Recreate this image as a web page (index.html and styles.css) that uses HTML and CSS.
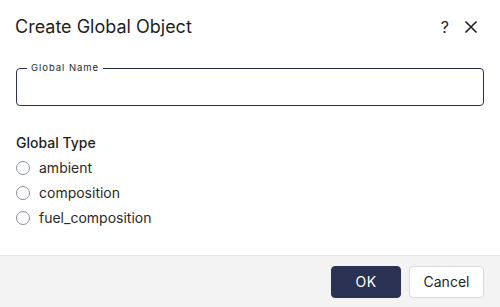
FILE: index.html
```html
<!DOCTYPE html>
<html>
<head>
<meta charset="utf-8">
<link rel="stylesheet" href="styles.css">
</head>
<body>
<div class="dialog">
  <div class="header">
    <h1 class="title">Create Global Object</h1>
    <div class="actions">
      <span class="help">?</span>
      <svg class="close" width="14" height="14" viewBox="0 0 14 14"><path d="M1.5 1.5L12.5 12.5M12.5 1.5L1.5 12.5" stroke="#1f1f1f" stroke-width="1.6" fill="none"/></svg>
    </div>
  </div>
  <div class="content">
    <fieldset class="field">
      <legend class="legend">Global Name</legend>
      <input class="input" type="text">
    </fieldset>
    <div class="group-label">Global Type</div>
    <div class="radios">
      <label class="radio"><span class="circle"></span>ambient</label>
      <label class="radio"><span class="circle"></span>composition</label>
      <label class="radio"><span class="circle"></span>fuel_composition</label>
    </div>
  </div>
  <div class="footer">
    <button class="btn btn-primary">OK</button>
    <button class="btn btn-secondary">Cancel</button>
  </div>
</div>
</body>
</html>
```
FILE: styles.css
```css
* { box-sizing: border-box; }
html, body { margin: 0; padding: 0; background: #fff; }
body { font-family: Inter, "Noto Sans", sans-serif; color: #1f1f1f; width: 500px; height: 307px; overflow: hidden; }
.dialog { display: flex; flex-direction: column; height: 307px; }
.header { display: flex; align-items: center; justify-content: space-between; padding: 13px 22px 0 15px; height: 40px; }
.title { margin: 0; font-size: 18px; font-weight: 400; color: #1f1f1f; letter-spacing: 0; }
.actions { display: flex; align-items: center; gap: 15px; }
.help { font-size: 16px; color: #1f1f1f; }
.close { display: block; }
.content { flex: 1; padding: 23px 16px 0 16px; }
.field { margin: 0; padding: 0 8px; height: 43px; border: 1.5px solid #2b3152; border-radius: 4px; position: relative; }
.legend { font-size: 9.5px; letter-spacing: 0.95px; padding: 0 4px; margin-left: 2px; color: #2a2a2a; line-height: 10px; }
.input { border: 0; outline: none; width: 100%; height: 30px; background: transparent; font: inherit; }
.group-label { margin-top: 28px; font-size: 14px; font-weight: 500; color: #1f1f1f; }
.radios { margin-top: 7px; display: flex; flex-direction: column; gap: 6px; }
.radio { display: flex; align-items: center; gap: 9px; font-size: 14px; color: #2a2a2a; height: 19px; }
.circle { width: 14px; height: 14px; border: 1.6px solid #8a909c; border-radius: 50%; display: inline-block; }
.footer { height: 52px; background: #f3f3f4; border-top: 1px solid #e4e4e6; display: flex; justify-content: flex-end; align-items: center; gap: 8px; padding: 0 16px 0 0; }
.btn { height: 32px; border-radius: 4px; font-family: inherit; font-size: 14px; padding: 0; }
.btn-primary { width: 70px; background: #2b3152; color: #fff; border: 1px solid #2b3152; letter-spacing: 0.5px; }
.btn-secondary { width: 75px; background: #fff; color: #1f1f1f; border: 1px solid #d8d8dc; }
```
